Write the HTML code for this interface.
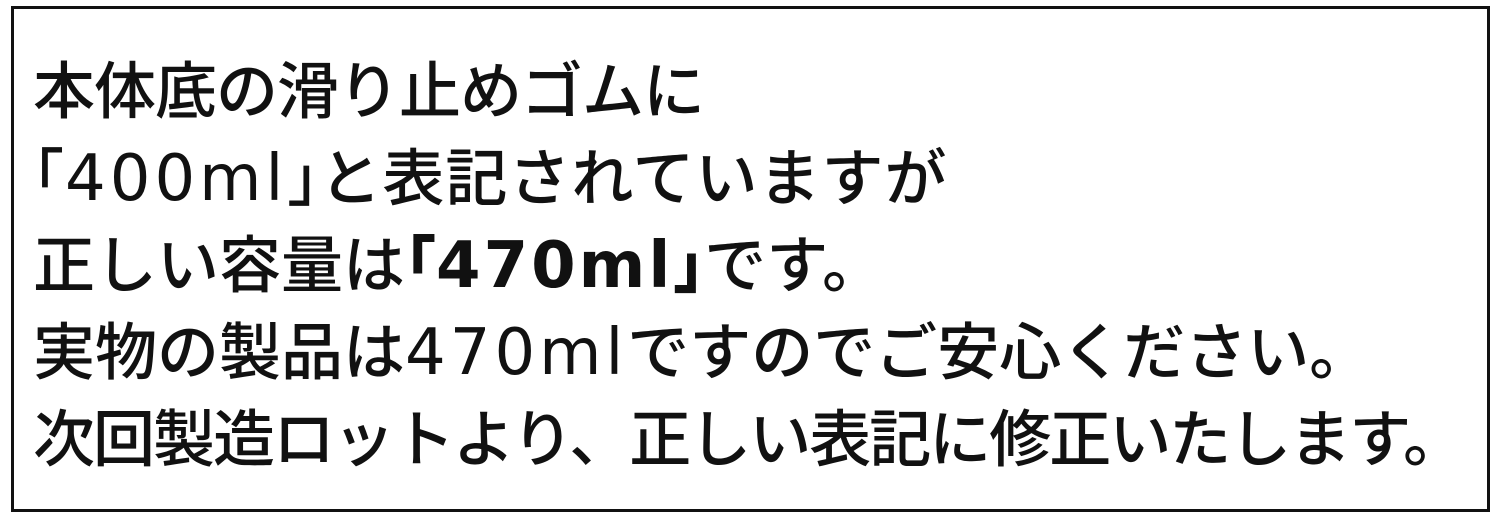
<!DOCTYPE html>
<html><head><meta charset="utf-8"><style>
html,body{margin:0;padding:0;background:#fff;}
body{width:1500px;height:522px;position:relative;overflow:hidden;}
.box{position:absolute;left:11px;top:6px;width:1473px;height:500px;border:3px solid #111;}
.l{position:absolute;left:33px;font-family:"Noto Sans CJK JP",sans-serif;font-weight:500;font-size:62px;line-height:64px;color:#111;white-space:nowrap;}
.h{font-feature-settings:"halt";}
.d{font-family:"DejaVu Sans",sans-serif;font-weight:normal;font-size:64px;letter-spacing:4px;}
.db{font-family:"DejaVu Sans",sans-serif;font-weight:bold;font-size:64px;letter-spacing:3px;}
</style></head><body>
<div class="box"></div>
<div class="l" style="top:54px;letter-spacing:-1px">本体底の滑り止めゴムに</div>
<div class="l" style="top:141px;letter-spacing:1px"><span class="h">「</span><span class="d">400ml</span><span class="h">」</span>と表記されていますが</div>
<div class="l" style="top:228px">正しい容量は<span class="h" style="font-weight:900">「</span><span class="db">470ml</span><span class="h" style="font-weight:900">」</span>です。</div>
<div class="l" style="top:315px">実物の製品は<span class="d">470ml</span>ですのでご安心ください。</div>
<div class="l" style="top:402px;letter-spacing:-2px">次回製造ロットより、正しい表記に修正いたします。</div>
</body></html>
